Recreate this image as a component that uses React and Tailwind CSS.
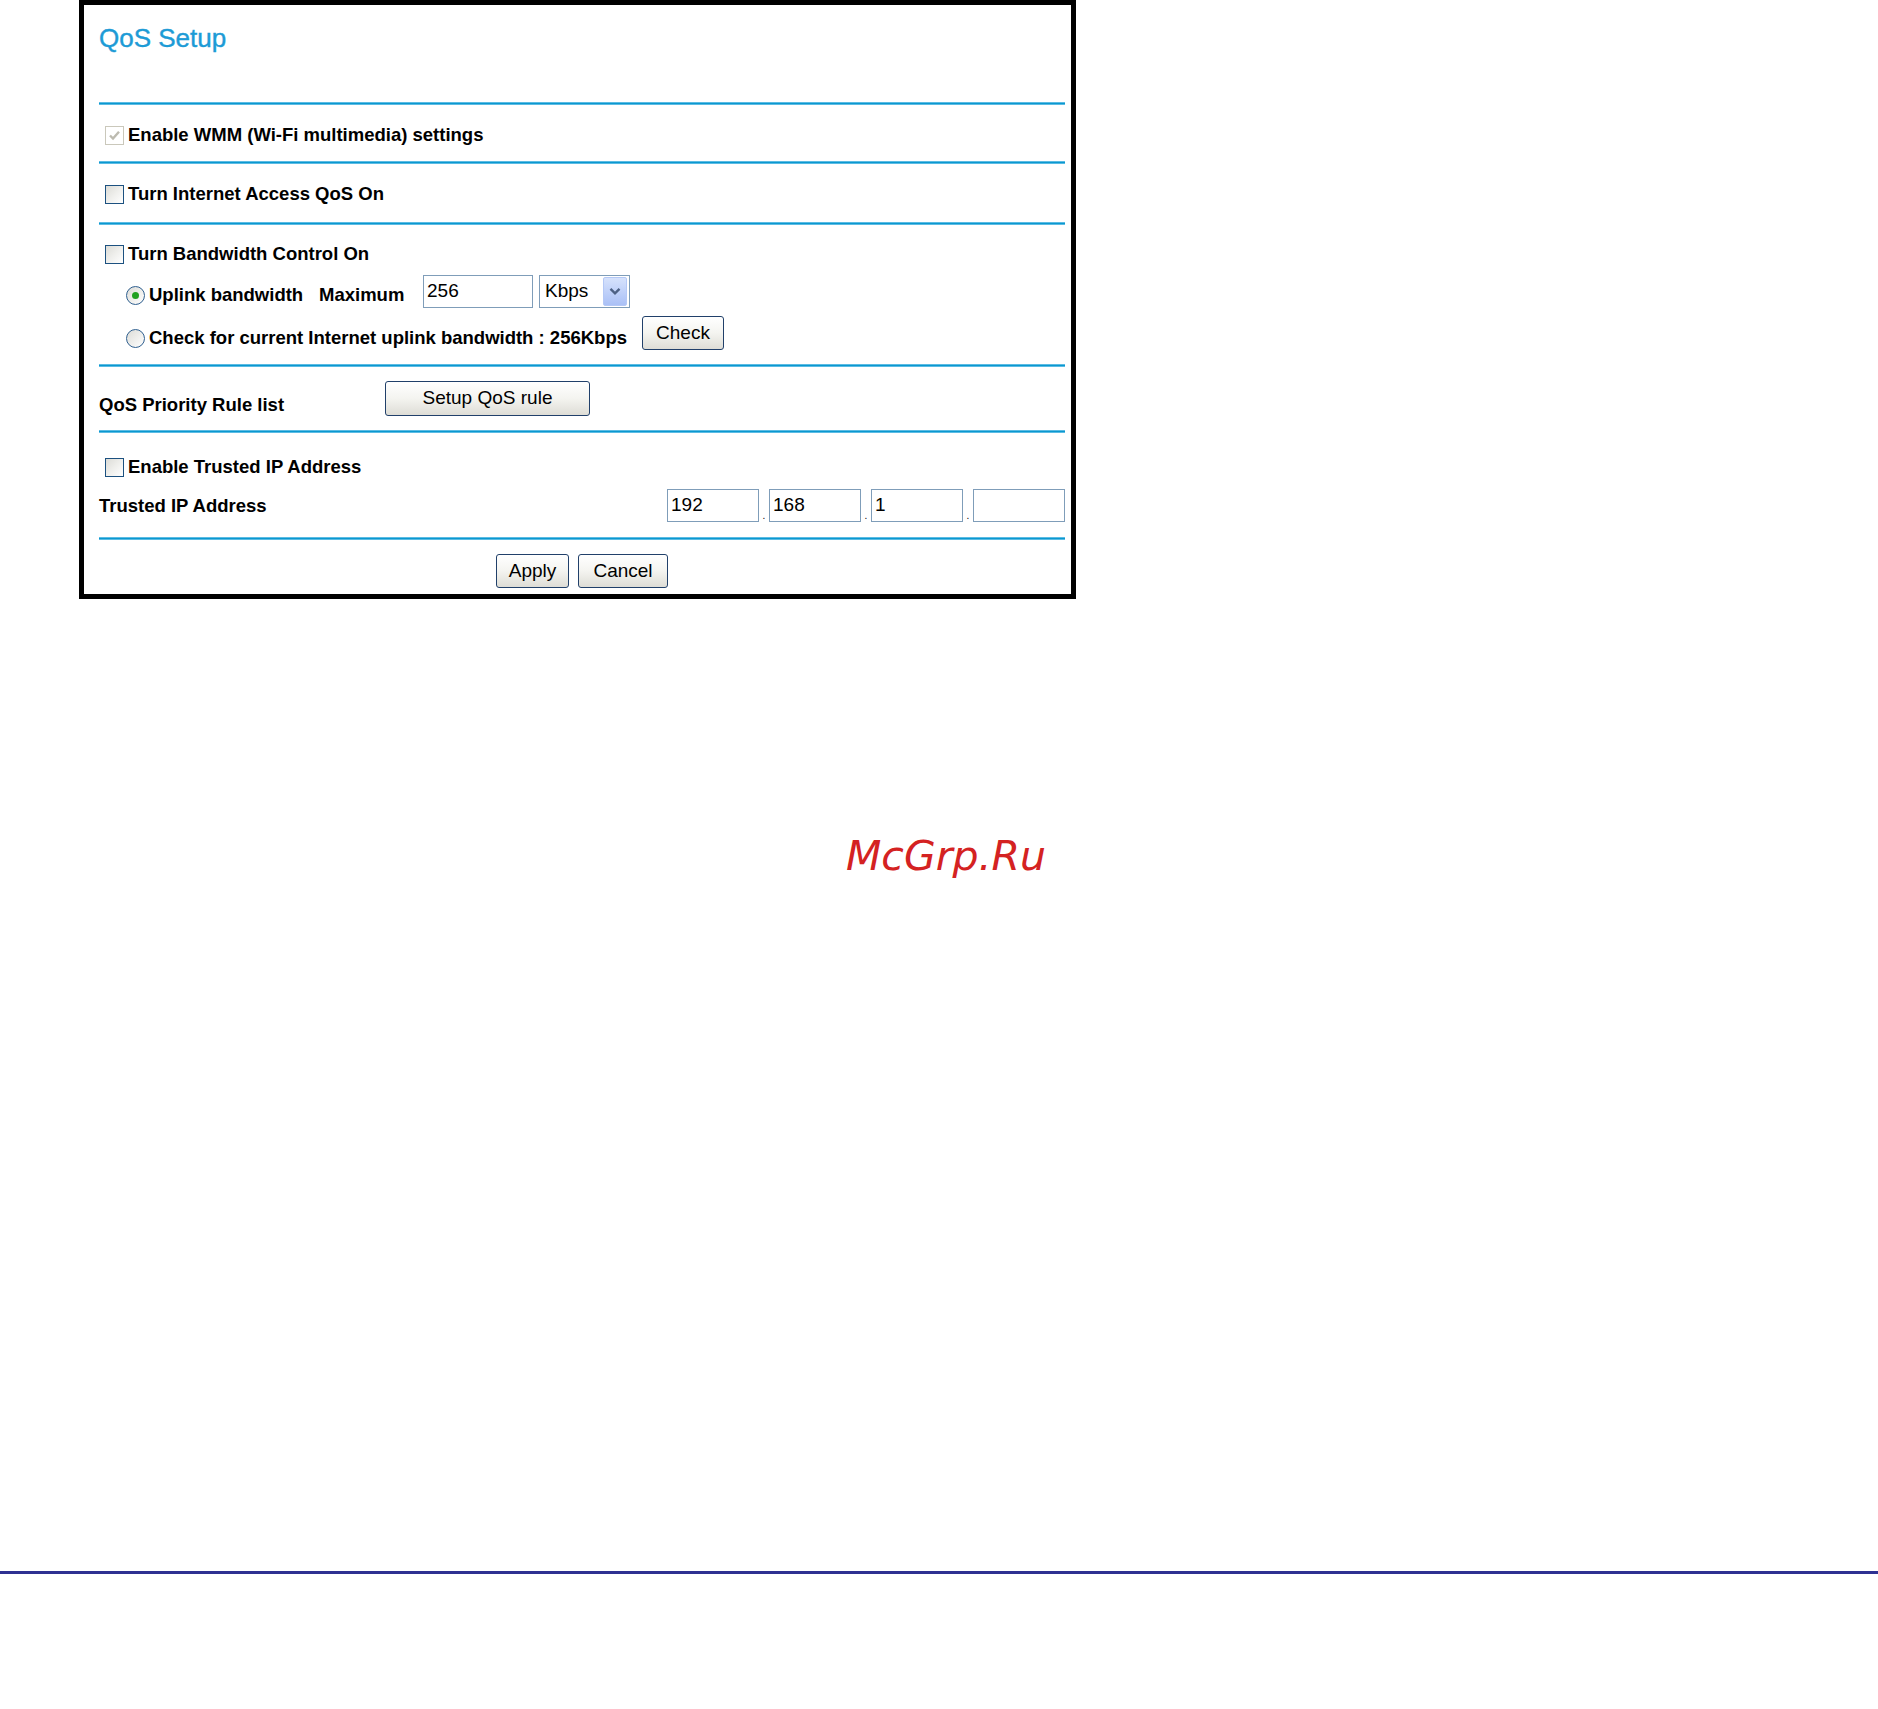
import React from "react";

const UI = { fontFamily: '"Liberation Sans", Arial, sans-serif' };

function Checkbox({ disabled, checked }) {
  if (disabled) {
    return (
      <span className="w-[19px] h-[19px] border border-[#cac8bb] bg-white flex items-center justify-center shrink-0">
        {checked && (
          <svg width="15" height="15" viewBox="0 0 15 15">
            <path d="M3 7.5 L6 10.5 L12 3.8" fill="none" stroke="#bdbbb0" strokeWidth="2.4" />
          </svg>
        )}
      </span>
    );
  }
  return (
    <span className="w-[19px] h-[19px] border border-[#1c5180] bg-gradient-to-br from-[#dcdcd7] via-[#efefec] to-white shrink-0" />
  );
}

function Radio({ checked }) {
  return (
    <span className="w-[19px] h-[19px] rounded-full border border-[#2f5f8f] bg-gradient-to-br from-[#dcdcd7] to-white flex items-center justify-center shrink-0">
      {checked && <span className="w-[7px] h-[7px] rounded-full bg-[#21a121]" />}
    </span>
  );
}

function Btn({ children, className = "" }) {
  return (
    <div
      className={
        "h-[34px] rounded-[3px] border border-[#21406a] bg-gradient-to-b from-white via-[#f4f4f0] to-[#deddd6] flex items-center justify-center text-[19px] text-black shrink-0 " +
        className
      }
      style={UI}
    >
      {children}
    </div>
  );
}

function Line() {
  return <div className="h-[3px] bg-[#0a98d0] border-y border-[#5bbbe3]" />;
}

function TextBox({ value, w = "w-[92px]", extra = "" }) {
  return (
    <div className={"h-[33px] border border-[#7f9db9] bg-white flex items-center pl-[3px] text-[19px] text-black shrink-0 " + w + " " + extra} style={UI}>
      {value}
    </div>
  );
}

const B = "text-[18.5px] font-bold text-black whitespace-nowrap";

export default function App() {
  return (
    <div className="w-[1878px] h-[1709px] bg-white flex flex-col" style={UI}>
      <div className="ml-[79px] w-[997px] border-[5px] border-black bg-white">
        <div className="pl-[15px] pr-[6px] flex flex-col">
          <div className="h-[97px] pt-[18px]">
            <div className="text-[26px] leading-[30px] text-[#1d9bd6] [-webkit-text-stroke:0.4px_#1d9bd6]">QoS Setup</div>
          </div>
          <Line />
          <div className="h-[56px] flex items-center pl-[6px] pt-[4px] gap-[4px]">
            <Checkbox disabled checked />
            <span className={B}>Enable WMM (Wi-Fi multimedia) settings</span>
          </div>
          <Line />
          <div className="h-[58px] flex items-center pl-[6px] pt-[2px] gap-[4px]">
            <Checkbox />
            <span className={B}>Turn Internet Access QoS On</span>
          </div>
          <Line />
          <div className="h-[139px] pt-[15px] flex flex-col">
            <div className="h-[28px] flex items-center pl-[6px] gap-[4px]">
              <Checkbox />
              <span className={B}>Turn Bandwidth Control On</span>
            </div>
            <div className="h-[34px] mt-[10px] flex items-center pl-[27px]">
              <Radio checked />
              <span className={B + " ml-[4px] w-[170px]"}>Uplink bandwidth</span>
              <span className={B + " w-[104px]"}>Maximum</span>
              <TextBox value="256" w="w-[110px]" extra="mb-[8px]" />
              <div className="ml-[6px] mb-[8px] w-[91px] h-[33px] border border-[#7f9db9] bg-white flex items-center justify-between pl-[5px] pr-[2px] text-[19px] text-black">
                <span>Kbps</span>
                <span className="w-[24px] h-[29px] rounded-[2px] border border-[#b4c8f6] bg-gradient-to-b from-[#d6e2fc] to-[#aac0f6] flex items-center justify-center">
                  <svg width="12" height="9" viewBox="0 0 12 9">
                    <path d="M1.5 1.8 L6 6.3 L10.5 1.8" fill="none" stroke="#4d6185" strokeWidth="2.4" />
                  </svg>
                </span>
              </div>
            </div>
            <div className="h-[34px] mt-[9px] flex items-center pl-[27px]">
              <Radio />
              <span className={B + " ml-[4px] w-[493px]"}>
                Check for current Internet uplink bandwidth : 256Kbps
              </span>
              <Btn className="w-[82px] mb-[10px]">Check</Btn>
            </div>
          </div>
          <Line />
          <div className="h-[63px] pt-[14px] flex items-end pb-[14px]">
            <span className={B + " w-[286px] mb-[-3px]"}>QoS Priority Rule list</span>
            <Btn className="w-[205px] h-[35px]">Setup QoS rule</Btn>
          </div>
          <Line />
          <div className="h-[104px] pt-[21px] flex flex-col">
            <div className="h-[26px] flex items-center pl-[6px] gap-[4px]">
              <Checkbox />
              <span className={B}>Enable Trusted IP Address</span>
            </div>
            <div className="h-[33px] mt-[9px] flex items-center">
              <span className={B}>Trusted IP Address</span>
              <div className="ml-auto flex items-end">
                <TextBox value="192" />
                <span className="w-[10px] text-center text-[10px] leading-[12px] text-black">.</span>
                <TextBox value="168" />
                <span className="w-[10px] text-center text-[10px] leading-[12px] text-black">.</span>
                <TextBox value="1" />
                <span className="w-[10px] text-center text-[10px] leading-[12px] text-black">.</span>
                <TextBox value="" />
              </div>
            </div>
          </div>
          <Line />
          <div className="h-[54px] pt-[14px] flex justify-center gap-[9px]">
            <Btn className="w-[73px]">Apply</Btn>
            <Btn className="w-[90px]">Cancel</Btn>
          </div>
        </div>
      </div>
      <div
        className="mt-[236px] pl-[846px] h-[42px] leading-[42px] text-[41px] italic text-[#d42222]"
        style={{ fontFamily: '"DejaVu Sans", sans-serif' }}
      >
        McGrp.Ru
      </div>
      <div className="mt-[694px] h-[3px] bg-[#2e3192]" />
    </div>
  );
}
